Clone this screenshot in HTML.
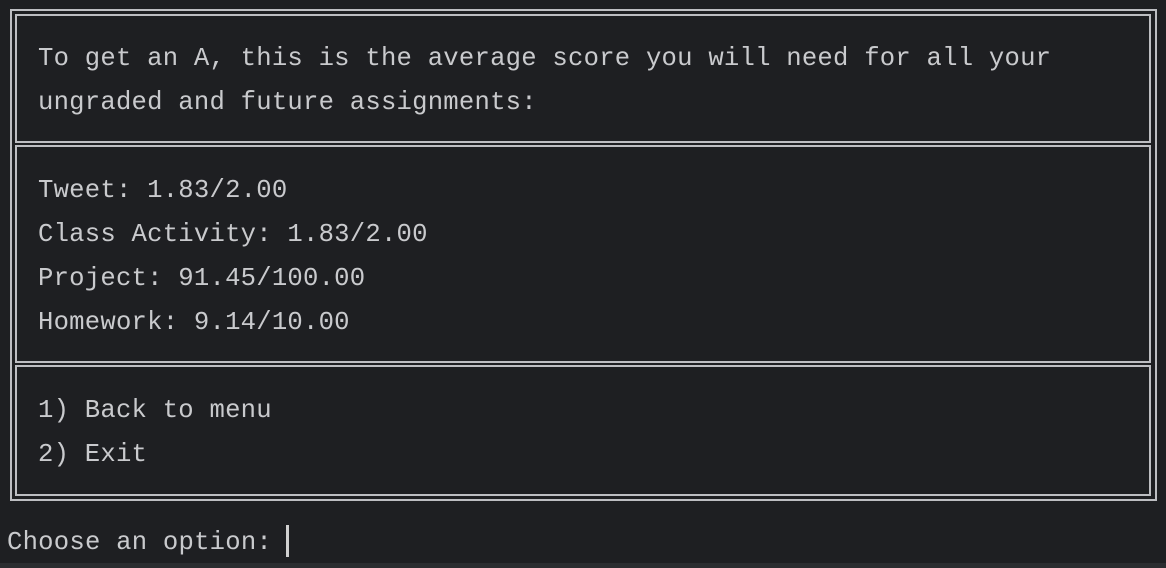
<!DOCTYPE html>
<html><head><style>
html,body{margin:0;padding:0;background:#1e1f22;width:1166px;height:568px;overflow:hidden;position:relative}
.b{position:absolute;border:2px solid #bdbec2;box-sizing:border-box}
.t{position:absolute;left:38px;font-family:"Liberation Mono","DejaVu Sans Mono",monospace;font-size:25.6px;letter-spacing:0.23px;color:#c9cacd;white-space:pre;line-height:30px}
</style></head><body>
<div class="b" style="left:10px;top:9px;width:1147px;height:492px"></div>
<div class="b" style="left:15px;top:14px;width:1136px;height:129px"></div>
<div class="b" style="left:15px;top:145px;width:1136px;height:218px"></div>
<div class="b" style="left:15px;top:365px;width:1136px;height:131px"></div>
<div class="t" style="top:44px">To get an A, this is the average score you will need for all your</div>
<div class="t" style="top:88px">ungraded and future assignments:</div>
<div class="t" style="top:176px">Tweet: 1.83/2.00</div>
<div class="t" style="top:220px">Class Activity: 1.83/2.00</div>
<div class="t" style="top:264px">Project: 91.45/100.00</div>
<div class="t" style="top:308px">Homework: 9.14/10.00</div>
<div class="t" style="top:396px">1) Back to menu</div>
<div class="t" style="top:440px">2) Exit</div>
<div class="t" style="top:528px;left:7px">Choose an option: </div>
<div style="position:absolute;left:286px;top:525px;width:3px;height:32px;background:#d0d0d0"></div>
<div style="position:absolute;left:0;top:563px;width:1166px;height:5px;background:#2b2d30"></div>
</body></html>
